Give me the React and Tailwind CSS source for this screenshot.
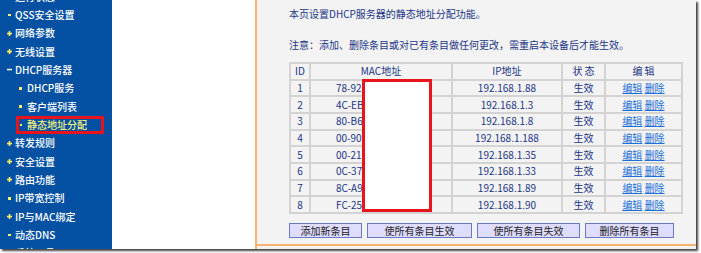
import React from "react";

const menu = [
  { t: "运行状态", m: "plus" },
  { t: "QSS安全设置", m: "dot" },
  { t: "网络参数", m: "plus" },
  { t: "无线设置", m: "plus" },
  { t: "DHCP服务器", m: "minus" },
  { t: "DHCP服务", m: "dot", sub: true },
  { t: "客户端列表", m: "dot", sub: true },
  { t: "静态地址分配", m: "dot", sub: true, active: true },
  { t: "转发规则", m: "plus" },
  { t: "安全设置", m: "plus" },
  { t: "路由功能", m: "plus" },
  { t: "IP带宽控制", m: "dot" },
  { t: "IP与MAC绑定", m: "plus" },
  { t: "动态DNS", m: "dot" },
  { t: "系统工具", m: "plus" },
];

const rows = [
  ["1", "78-92", "192.168.1.88"],
  ["2", "4C-EB", "192.168.1.3"],
  ["3", "80-B6", "192.168.1.8"],
  ["4", "00-90", "192.168.1.188"],
  ["5", "00-21", "192.168.1.35"],
  ["6", "0C-37", "192.168.1.33"],
  ["7", "8C-A9", "192.168.1.89"],
  ["8", "FC-25", "192.168.1.90"],
];

function Marker({ type }) {
  if (type === "plus")
    return (
      <svg width="5" height="5" viewBox="0 0 5 5" className="shrink-0">
        <rect x="0" y="1.75" width="5" height="1.6" fill="#fff266" />
        <rect x="1.7" y="0" width="1.6" height="5" fill="#fff266" />
      </svg>
    );
  if (type === "minus")
    return (
      <svg width="5" height="5" viewBox="0 0 5 5" className="shrink-0">
        <rect x="0" y="1.75" width="5" height="1.6" fill="#f4f1c8" />
      </svg>
    );
  return (
    <span className="flex w-[5px] shrink-0 justify-center">
      <span className="block h-[2.5px] w-[2.5px] bg-[#fff266]" />
    </span>
  );
}

function Sidebar() {
  return (
    <div className="h-full w-[112px] shrink-0 overflow-hidden bg-[#0451a4] text-[10px] font-medium leading-none text-white">
      <div className="-mt-[12.5px]">
        {menu.map((it) =>
          it.active ? (
            <div key={it.t} className="flex h-[18.33px] items-center">
              <div className="ml-[16px] flex h-full w-[88px] items-center border-[3px] border-[#e8141c]">
                <span className="flex w-[4px] shrink-0 justify-center">
                  <span className="block h-[2.5px] w-[2.5px] bg-[#fff266]" />
                </span>
                <span className="ml-[4px] text-[#f6f07c]">{it.t}</span>
              </div>
            </div>
          ) : (
            <div key={it.t} className="flex h-[18.33px] items-center">
              <div className={it.sub ? "ml-[18px] flex items-center" : "ml-[7px] flex items-center"}>
                <Marker type={it.m} />
                <span className={it.sub ? "ml-[4px]" : "ml-[3px]"}>{it.t}</span>
              </div>
            </div>
          )
        )}
      </div>
    </div>
  );
}

function Btn({ w, children }) {
  return (
    <div className={`flex h-[15px] items-center justify-center border border-[#6b78c2] bg-[#dedcff] text-[10px] leading-none text-[#222] ${w}`}>
      {children}
    </div>
  );
}

function Content() {
  const td = "border-2 border-[#d3d3d3] text-center leading-none";
  return (
    <div className="flex h-full flex-1 flex-col border-l-2 border-[#f8b46e] bg-[#f3f3f3] text-[10px] leading-[12px] text-[#1c3588]">
      <div className="pl-[32px] pt-[8px]">
        <p>本页设置DHCP服务器的静态地址分配功能。</p>
        <p className="mt-[19px]">注意：添加、删除条目或对已有条目做任何更改，需重启本设备后才能生效。</p>
        <div className="relative mt-[11px] w-[392px]">
          <table className="w-[392px] table-fixed border-collapse">
            <colgroup>
              <col className="w-[20px]" />
              <col className="w-[142px]" />
              <col className="w-[110px]" />
              <col className="w-[43px]" />
              <col className="w-[77px]" />
            </colgroup>
            <thead>
              <tr className="h-[16.6px]">
                <td className={td}>ID</td>
                <td className={td}>MAC地址</td>
                <td className={td}>IP地址</td>
                <td className={td}>状 态</td>
                <td className={td}>编 辑</td>
              </tr>
            </thead>
            <tbody>
              {rows.map((r) => (
                <tr key={r[0]} className="h-[16.7px]">
                  <td className={td}>{r[0]}</td>
                  <td className="border-2 border-[#d3d3d3] pl-[25px] text-left leading-none">{r[1]}</td>
                  <td className={td}>{r[2]}</td>
                  <td className={td}>生效</td>
                  <td className={td}>
                    <span className="text-[#1d6fd8] underline">编辑</span>{" "}
                    <span className="text-[#1d6fd8] underline">删除</span>
                  </td>
                </tr>
              ))}
            </tbody>
          </table>
          <div className="absolute left-[73px] top-[17px] h-[133px] w-[70px] border-[3px] border-[#e8141c] bg-white" />
        </div>
        <div className="mt-[9px] flex gap-[5px]">
          <Btn w="w-[73px]">添加新条目</Btn>
          <Btn w="w-[105px]">使所有条目生效</Btn>
          <Btn w="w-[103px]">使所有条目失效</Btn>
          <Btn w="w-[89px]">删除所有条目</Btn>
        </div>
      </div>
      <div className="mb-[3px] mt-auto h-[2px] bg-[#f8b46e]" />
    </div>
  );
}

export default function App() {
  return (
    <div className="h-[253px] w-[701px] overflow-hidden bg-white" style={{ fontFamily: '"Noto Sans CJK SC", "Noto Sans", sans-serif' }}>
      <div className="flex h-[249px] w-[696px] shadow-[2px_2px_2px_rgba(0,0,0,0.75)]">
        <Sidebar />
        <div className="w-[143px] shrink-0 bg-white" />
        <Content />
      </div>
    </div>
  );
}
